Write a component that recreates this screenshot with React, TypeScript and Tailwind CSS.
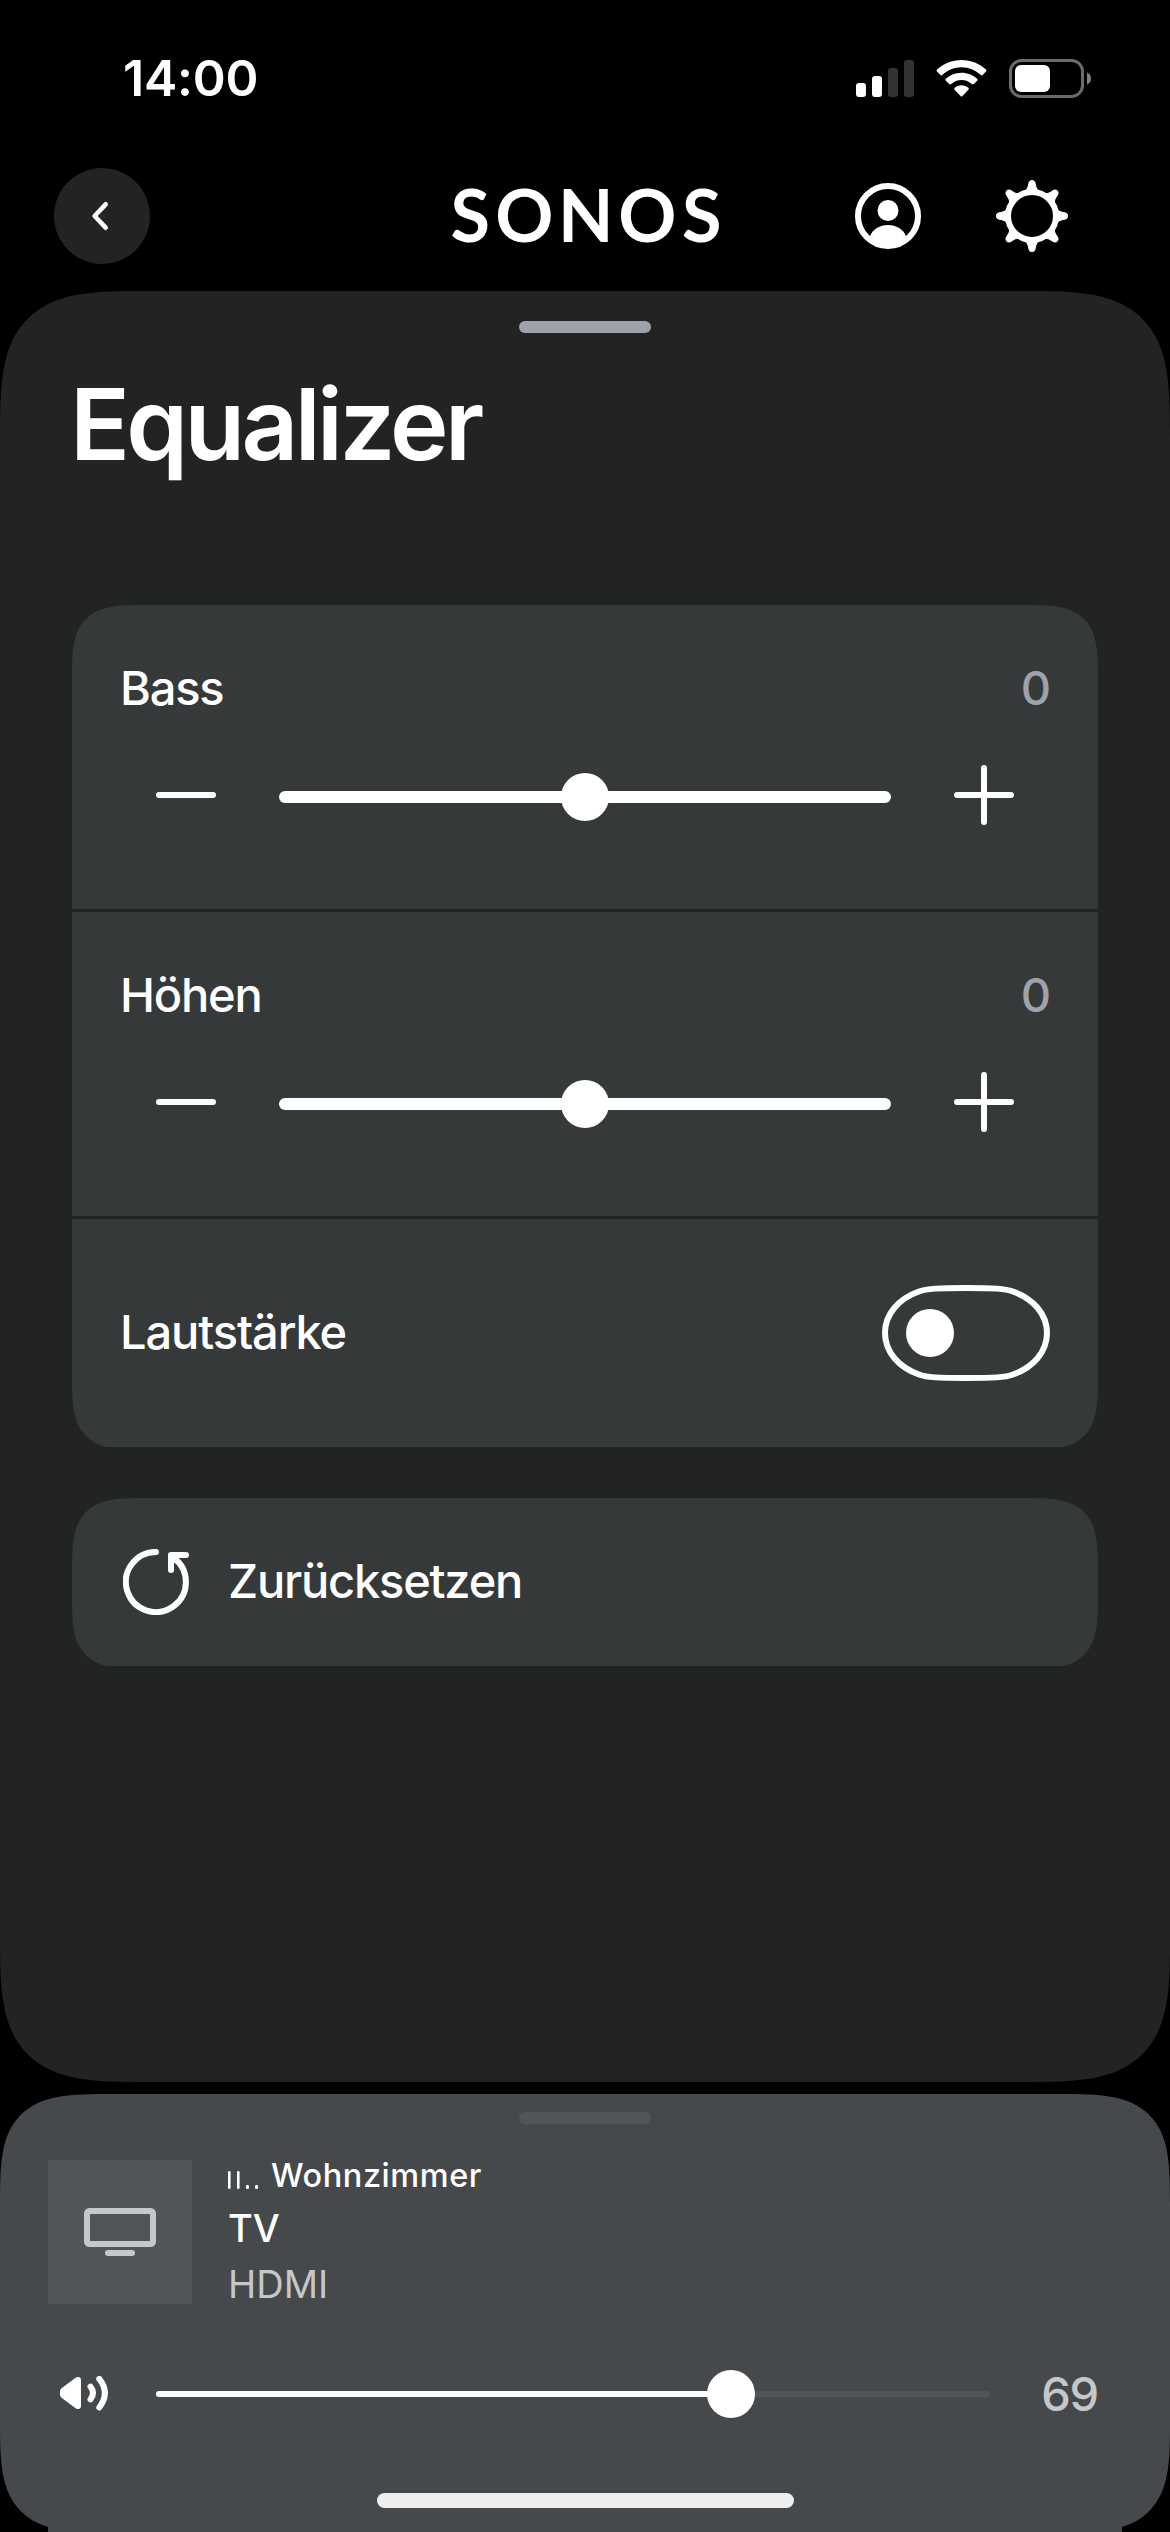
import React, { useState } from 'react';

interface LevelRowProps {
  label: string;
  value: number;
  onChange: (value: number) => void;
}

const MIN_LEVEL = -10;
const MAX_LEVEL = 10;

const StatusBar: React.FC = () => (
  <div className="flex h-[156px] items-center justify-between pl-[123px] pr-[79px]">
    <span className="text-[50px] leading-none font-semibold tracking-[-0.2px]">14:00</span>
    <div className="flex items-center">
      <svg className="h-[39px] w-[58px]" viewBox="0 0 58 39">
        <rect x="0" y="24" width="10" height="14" rx="3" fill="#fff" />
        <rect x="16" y="17" width="10" height="21" rx="3" fill="#fff" />
        <rect x="32" y="9" width="10" height="29" rx="3" fill="#333" />
        <rect x="48" y="1" width="10" height="37" rx="3" fill="#333" />
      </svg>
      <svg className="ml-[22px] h-[39px] w-[51px]" viewBox="0 0 51 39" fill="#fff">
        <path d="M25.5 1 C35 1 43.5 4.6 50 10.6 Q51 11.6 50 12.6 L46.6 16 Q45.7 16.8 44.7 16 C39.5 11.2 33 8.3 25.5 8.3 C18 8.3 11.5 11.2 6.3 16 Q5.3 16.8 4.4 16 L1 12.6 Q0 11.6 1 10.6 C7.5 4.6 16 1 25.5 1 Z" />
        <path d="M25.5 13.7 C31.5 13.7 37 16 41.2 19.7 Q42.2 20.7 41.2 21.7 L37.8 25.1 Q36.9 25.9 35.9 25.1 C33 22.6 29.5 21 25.5 21 C21.5 21 18 22.6 15.1 25.1 Q14.1 25.9 13.2 25.1 L9.8 21.7 Q8.8 20.7 9.8 19.7 C14 16 19.5 13.7 25.5 13.7 Z" />
        <path d="M25.5 26.3 C28 26.3 30.5 27.2 32.4 28.8 Q33.4 29.7 32.4 30.8 L26.5 37 Q25.5 38 24.5 37 L18.6 30.8 Q17.6 29.7 18.6 28.8 C20.5 27.2 23 26.3 25.5 26.3 Z" />
      </svg>
      <svg className="ml-[22px] h-[39px] w-[82px]" viewBox="0 0 82 39">
        <rect x="1.5" y="1.5" width="72" height="36" rx="11" fill="none" stroke="#6b6b6b" strokeWidth="3" />
        <rect x="6" y="6" width="35" height="27" rx="6" fill="#fff" />
        <path d="M78 13.5 Q82 15 82 19.5 Q82 24 78 25.5 Z" fill="#808080" />
      </svg>
    </div>
  </div>
);

const SonosLogo: React.FC = () => (
  <svg className="h-[66px] w-[268px] overflow-visible" viewBox="0 0 268 66">
    <text
      x="-0.4 44.3 106.9 167.3 231"
      y="59.4"
      fill="#fff"
      className="font-['Lato'] text-[72px] font-bold"
    >
      SONOS
    </text>
  </svg>
);

const GEAR_ANGLES = [0, 45, 90, 135, 180, 225, 270, 315];

const Header: React.FC = () => (
  <header className="grid h-[120px] grid-cols-[1fr_268px_1fr] items-center">
    <div className="pl-[54px]">
      <button aria-label="Zurück" className="flex size-24 items-center justify-center rounded-full bg-[#222325]">
        <svg className="mr-1 size-8" viewBox="0 0 32 32" fill="none" stroke="#fff" strokeWidth="4.6" strokeLinecap="round" strokeLinejoin="round">
          <path d="M21.7 4.3 L10.6 16 L21.7 27.7" />
        </svg>
      </button>
    </div>
    <SonosLogo />
    <div className="flex items-center justify-end gap-[75px] pr-[102px]">
      <svg className="size-[66px]" viewBox="0 0 66 66">
        <circle cx="33" cy="33" r="30" fill="none" stroke="#fff" strokeWidth="6" />
        <circle cx="33" cy="27.5" r="10.5" fill="#fff" />
        <path d="M15.1 53 C18 46 24.5 42 33 42 C41.5 42 48 46 50.9 53 C46.5 58.5 40 62 33 62 C26 62 19.5 58.5 15.1 53 Z" fill="#fff" />
      </svg>
      <svg className="size-[72px]" viewBox="-36 -36 72 72">
        <circle r="24" fill="none" stroke="#fff" strokeWidth="6" />
        {GEAR_ANGLES.map((angle) => (
          <path
            key={angle}
            d="M-8 -24.5 C-5 -26.5 -4.3 -29 -3.7 -32.5 Q-3 -36 0 -36 Q3 -36 3.7 -32.5 C4.3 -29 5 -26.5 8 -24.5 Z"
            transform={`rotate(${angle})`}
            fill="#fff"
          />
        ))}
      </svg>
    </div>
  </header>
);

const LevelRow: React.FC<LevelRowProps> = ({ label, value, onChange }) => {
  const percent = ((value - MIN_LEVEL) / (MAX_LEVEL - MIN_LEVEL)) * 100;

  return (
    <div className="h-[304px] px-12 pt-[53px]">
      <div className="flex h-[60px] items-center justify-between text-[47px] leading-[60px] font-medium tracking-[-1.2px]">
        <span>{label}</span>
        <span className="text-[#9fa2aa]">{value}</span>
      </div>
      <div className="mt-[47px] flex h-[60px] items-center px-9">
        <button
          aria-label={`${label} verringern`}
          className="flex size-[60px] items-center"
          onClick={() => onChange(Math.max(MIN_LEVEL, value - 1))}
        >
          <span className="h-1.5 w-[60px] rounded-full bg-white" />
        </button>
        <div className="relative mx-[63px] mt-1 h-3 flex-1 rounded-full bg-white">
          <div
            className="absolute top-1/2 size-12 -translate-x-1/2 -translate-y-1/2 rounded-full bg-white"
            style={{ left: `${percent}%` }}
          />
        </div>
        <button
          aria-label={`${label} erhöhen`}
          className="size-[60px]"
          onClick={() => onChange(Math.min(MAX_LEVEL, value + 1))}
        >
          <svg className="size-[60px]" viewBox="0 0 60 60" stroke="#fff" strokeWidth="6" strokeLinecap="round">
            <path d="M3 30 H57 M30 3 V57" />
          </svg>
        </button>
      </div>
    </div>
  );
};

const Toggle: React.FC<{ checked: boolean; onToggle: () => void }> = ({ checked, onToggle }) => (
  <button role="switch" aria-checked={checked} aria-label="Lautstärke" onClick={onToggle}>
    <svg className="h-24 w-[168px]" viewBox="0 0 168 96">
      <path
        d="M84 3 C112 3 123 3.5 131 6.5 C151 13.5 165 29 165 48 C165 67 151 82.5 131 89.5 C123 92.5 112 93 84 93 C56 93 45 92.5 37 89.5 C17 82.5 3 67 3 48 C3 29 17 13.5 37 6.5 C45 3.5 56 3 84 3 Z"
        fill="none"
        stroke="#fff"
        strokeWidth="6"
      />
      <circle cx={checked ? 120 : 48} cy="48" r="24" fill="#fff" />
    </svg>
  </button>
);

const NowPlaying: React.FC<{ volume: number }> = ({ volume }) => (
  <section className="relative mt-3 h-[438px] rounded-[72px] bg-[#46494b] supports-[corner-shape:squircle]:rounded-[110px] supports-[corner-shape:squircle]:[corner-shape:superellipse(1.72)]">
    <div className="absolute inset-x-12 bottom-0 h-5 bg-[#46494b]" />
    <div className="flex flex-col pt-[18px]">
      <div className="h-3 w-[132px] self-center rounded-full bg-[#525557]" />
      <div className="mt-9 flex h-36 px-12">
        <div className="flex size-36 items-center justify-center bg-[#525558]">
          <svg className="size-[72px]" viewBox="0 0 72 72" fill="none" stroke="#c6c7cb" strokeWidth="6">
            <rect x="3" y="15" width="66" height="33" rx="2.5" />
            <path d="M24 57 H48" strokeLinecap="round" />
          </svg>
        </div>
        <div className="-mt-0.5 ml-9 flex flex-col">
          <div className="flex h-9 items-center">
            <svg className="mt-2 mr-[13px] h-[20px] w-[30px]" viewBox="0 0 30 20" fill="#fff">
              <rect x="0" y="1" width="2.6" height="18" rx="1.2" />
              <rect x="9" y="1" width="2.6" height="18" rx="1.2" />
              <rect x="18" y="15" width="3" height="4" rx="1.2" />
              <rect x="27" y="15" width="3" height="4" rx="1.2" />
            </svg>
            <span className="text-[32.5px] leading-9 font-medium tracking-[0.55px]">Wohnzimmer</span>
          </div>
          <span className="mt-[6px] text-[38px] leading-[56px] font-medium">TV</span>
          <span className="text-[38px] leading-[56px] text-[#c6c7cb]">HDMI</span>
        </div>
      </div>
      <div className="mt-[60px] flex h-[60px] items-center pl-[60px] pr-[72px]">
        <svg className="h-[36px] w-12" viewBox="0 0 48 36">
          <path d="M0 15.5 Q0 13.5 1.5 12.3 L16 1.6 Q17.5 0.6 19 1 Q21 1.5 21 4 V30 Q21 32.5 19 33 Q17.5 33.4 16 32.4 L1.500 21.7 Q0 20.5 0 18.5 Z" fill="#fff" />
          <g fill="none" stroke="#fff" strokeWidth="6" strokeLinecap="round">
            <path d="M30.5 10.7 Q35.5 17 30.5 23.3" />
            <path d="M39.3 2.8 Q50.5 17 39.3 31.5" />
          </g>
        </svg>
        <div className="relative ml-12 h-1.5 w-[834px] rounded-full bg-[#525558]">
          <div className="h-full rounded-full bg-white" style={{ width: `${volume}%` }} />
          <div
            className="absolute top-1/2 size-12 -translate-x-1/2 -translate-y-1/2 rounded-full bg-white"
            style={{ left: `${volume}%` }}
          />
        </div>
        <span className="ml-auto text-[47px] leading-[60px] font-medium tracking-[-1.2px] text-[#c6c7cb]">{volume}</span>
      </div>
    </div>
    {/* Home indicator */}
    <div className="absolute bottom-6 left-[377px] h-[15px] w-[417px] rounded-full bg-[#eee]" />
  </section>
);

const App: React.FC = () => {
  const [bass, setBass] = useState(0);
  const [treble, setTreble] = useState(0);
  const [loudness, setLoudness] = useState(false);

  const handleReset = () => {
    setBass(0);
    setTreble(0);
    setLoudness(false);
  };

  return (
    <div className="flex h-[2532px] w-[1170px] flex-col overflow-hidden bg-black font-['Inter',sans-serif] text-white">
      <StatusBar />
      <Header />

      <main className="mt-[15px] flex h-[1791px] flex-col rounded-[96px] bg-[#222325] px-[72px] pt-[30px] supports-[corner-shape:squircle]:rounded-[146px] supports-[corner-shape:squircle]:[corner-shape:superellipse(1.72)]">
        <div className="h-3 w-[132px] shrink-0 self-center rounded-full bg-[#9fa2aa]" />
        <h1 className="mt-[31px] -ml-0.5 h-[120px] text-[99px] leading-[120px] font-semibold tracking-[-3.6px]">Equalizer</h1>

        {/* The cards are 3px taller than their clip, which cuts the lower corners short */}
        <div className="mt-[121px] h-[842px] shrink-0 overflow-hidden">
          <div className="h-[845px] overflow-hidden rounded-[48px] bg-[#36393a] supports-[corner-shape:squircle]:rounded-[74px] supports-[corner-shape:squircle]:[corner-shape:superellipse(1.72)]">
            <LevelRow label="Bass" value={bass} onChange={setBass} />
            <div className="h-[3px] bg-[#222325]" />
            <LevelRow label="Höhen" value={treble} onChange={setTreble} />
            <div className="h-[3px] bg-[#222325]" />
            <div className="flex h-[228px] items-center justify-between px-12">
              <span className="pb-[3px] text-[47px] leading-none font-medium tracking-[-1.1px]">Lautstärke</span>
              <Toggle checked={loudness} onToggle={() => setLoudness((prev) => !prev)} />
            </div>
          </div>
        </div>

        <div className="mt-[51px] h-[168px] shrink-0 overflow-hidden">
          <button
            onClick={handleReset}
            className="flex h-[171px] w-full items-center rounded-[48px] bg-[#36393a] px-[51px] pb-[3px] supports-[corner-shape:squircle]:rounded-[74px] supports-[corner-shape:squircle]:[corner-shape:superellipse(1.72)]"
          >
            <svg className="size-[66px]" viewBox="0 0 66 66" fill="none" stroke="#fff" strokeWidth="6" strokeLinecap="round" strokeLinejoin="round">
              <path d="M33 3 A30 30 0 1 0 50.5 8.7" />
              <path d="M63 6 H48 V21" />
            </svg>
            <span className="ml-[39px] pb-[3px] text-[47px] leading-none font-medium tracking-[-1.2px]">Zurücksetzen</span>
          </button>
        </div>
      </main>

      <NowPlaying volume={69} />
    </div>
  );
};

export default App;
